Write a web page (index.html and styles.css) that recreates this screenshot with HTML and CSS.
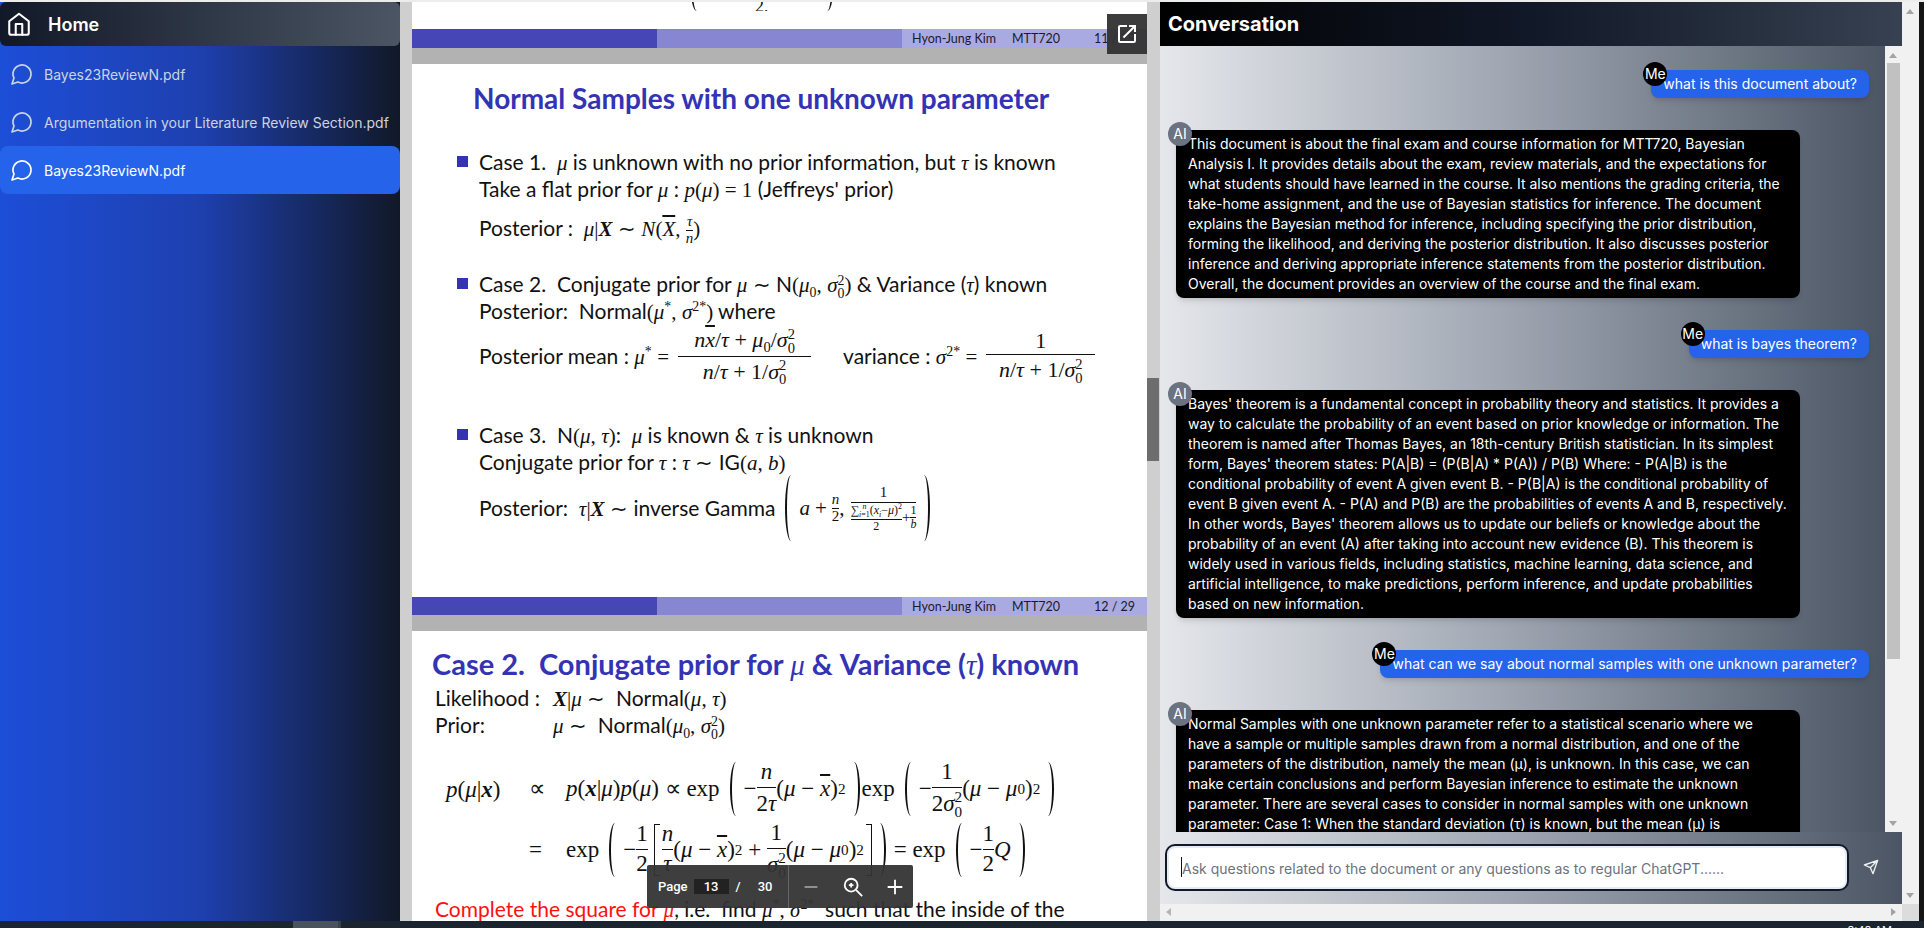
FILE: index.html
```html
<!DOCTYPE html>
<html lang="en">
<head>
<meta charset="utf-8">
<title>Conversation</title>
<link rel="stylesheet" href="styles.css">
</head>
<body>
<div class="app">
  <div class="main">
    <aside class="sidebar">
      <div class="home">
        <svg class="home-icon" viewBox="0 0 24 24"><path d="M3 9.5 12 2.5l9 7V20a2 2 0 0 1-2 2H5a2 2 0 0 1-2-2z"/><path d="M9 22V12h6v10"/></svg>
        <span>Home</span>
      </div>
      <nav class="docs">
        <a class="doc"><svg class="doc-icon" viewBox="0 0 24 24"><path d="M7.9 20A9 9 0 1 0 4 16.1L2 22Z"/></svg><span>Bayes23ReviewN.pdf</span></a>
        <a class="doc"><svg class="doc-icon" viewBox="0 0 24 24"><path d="M7.9 20A9 9 0 1 0 4 16.1L2 22Z"/></svg><span>Argumentation in your Literature Review Section.pdf</span></a>
        <a class="doc active"><svg class="doc-icon" viewBox="0 0 24 24"><path d="M7.9 20A9 9 0 1 0 4 16.1L2 22Z"/></svg><span>Bayes23ReviewN.pdf</span></a>
      </nav>
    </aside>

    <section class="pdf-pane">
      <div class="viewer">
        <div class="page page-tail">
          <div class="tail-math"><i class="lp p40"></i><span class="tail-two">2,</span><i class="rp p40"></i></div>
          <div class="bar">
            <i class="seg dark"></i><i class="seg mid"></i>
            <div class="seg light"><span class="bar-name">Hyon-Jung Kim</span><span class="bar-code">MTT720</span><span class="bar-num">11 / 29</span></div>
          </div>
        </div>

        <div class="page page-full">
          <h2 class="title title-a">Normal Samples with one unknown parameter</h2>
          <ul class="cases">
            <li class="case first">
              <p class="ln">Case 1. &nbsp;<span class="m">μ</span> is unknown with no prior information, but <span class="m">τ</span> is known</p>
              <p class="ln">Take a flat prior for <span class="m">μ</span> : <span class="m">p</span><span class="r">(</span><span class="m">μ</span><span class="r">) = 1</span> (Jeffreys' prior)</p>
              <p class="ln post1">Posterior : &nbsp;<span class="m">μ</span><span class="r">|</span><b class="bx">X</b> <span class="r">∼</span> <span class="m">N</span><span class="r">(</span><span class="m over">X</span><span class="r">,</span> <span class="frac small"><span class="m num">τ</span><span class="m den">n</span></span><span class="r">)</span></p>
            </li>
            <li class="case second">
              <p class="ln">Case 2. &nbsp;Conjugate prior for <span class="m">μ</span> <span class="r">∼</span> N<span class="r">(</span><span class="m">μ</span><sub class="r">0</sub><span class="r">,</span> <span class="m">σ</span><span class="ss"><span>2</span><span>0</span></span><span class="r">)</span> &amp; Variance (<span class="m">τ</span>) known</p>
              <p class="ln">Posterior: &nbsp;Normal<span class="r">(</span><span class="m">μ</span><sup class="r">*</sup><span class="r">,</span> <span class="m">σ</span><sup class="r">2*</sup><span class="r">)</span> where</p>
              <div class="ln eq mean">
                <span>Posterior mean : <span class="m">μ</span><sup class="r">*</sup> <span class="r">=</span></span>
                <span class="frac wide-a"><span class="num"><span class="m">n</span><span class="m over">x</span><span class="r">/</span><span class="m">τ</span><span class="r"> + </span><span class="m">μ</span><sub class="r">0</sub><span class="r">/</span><span class="m">σ</span><span class="ss"><span>2</span><span>0</span></span></span><span class="den"><span class="m">n</span><span class="r">/</span><span class="m">τ</span><span class="r"> + 1/</span><span class="m">σ</span><span class="ss"><span>2</span><span>0</span></span></span></span>
                <span class="variance">variance : <span class="m">σ</span><sup class="r">2*</sup> <span class="r">=</span></span>
                <span class="frac wide-b"><span class="num r">1</span><span class="den"><span class="m">n</span><span class="r">/</span><span class="m">τ</span><span class="r"> + 1/</span><span class="m">σ</span><span class="ss"><span>2</span><span>0</span></span></span></span>
              </div>
            </li>
            <li class="case third">
              <p class="ln">Case 3. &nbsp;N<span class="r">(</span><span class="m">μ</span><span class="r">,</span> <span class="m">τ</span><span class="r">)</span>: &nbsp;<span class="m">μ</span> is known &amp; <span class="m">τ</span> is unknown</p>
              <p class="ln">Conjugate prior for <span class="m">τ</span> : <span class="m">τ</span> <span class="r">∼</span> IG<span class="r">(</span><span class="m">a</span><span class="r">,</span> <span class="m">b</span><span class="r">)</span></p>
              <div class="ln eq gamma">
                <span>Posterior: &nbsp;<span class="m">τ</span><span class="r">|</span><b class="bx">X</b> <span class="r">∼</span> inverse Gamma</span>
                <i class="lp p66"></i>
                <span class="m">a</span><span class="r plus">+</span>
                <span class="frac small"><span class="m num">n</span><span class="r den">2</span></span><span class="r">,</span>
                <span class="frac nest"><span class="num r">1</span><span class="den nest-den"><span class="frac tiny"><span class="num"><span class="r">∑</span><span class="ss"><span class="m">n</span><span><span class="m">i</span>=1</span></span><span class="r">(</span><span class="m">x</span><sub class="m">i</sub><span class="r">−</span><span class="m">μ</span><span class="r">)</span><sup class="r">2</sup></span><span class="den r">2</span></span><span class="r">+</span><span class="frac tiny"><span class="num r">1</span><span class="den m">b</span></span></span></span>
                <i class="rp p66"></i>
              </div>
            </li>
          </ul>
          <div class="bar bar-end">
            <i class="seg dark"></i><i class="seg mid"></i>
            <div class="seg light"><span class="bar-name">Hyon-Jung Kim</span><span class="bar-code">MTT720</span><span class="bar-num">12 / 29</span></div>
          </div>
        </div>

        <div class="page page-last">
          <h2 class="title title-b">Case 2. &nbsp;Conjugate prior for <span class="m thin">μ</span> &amp; Variance (<span class="m thin">τ</span>) known</h2>
          <div class="defs">
            <p class="ln def"><span class="def-label">Likelihood :</span><span><b class="bx">X</b><span class="r">|</span><span class="m">μ</span> <span class="r">∼</span> &nbsp;Normal<span class="r">(</span><span class="m">μ</span><span class="r">,</span> <span class="m">τ</span><span class="r">)</span></span></p>
            <p class="ln def"><span class="def-label">Prior:</span><span><span class="m">μ</span> <span class="r">∼</span> &nbsp;Normal<span class="r">(</span><span class="m">μ</span><sub class="r">0</sub><span class="r">,</span> <span class="m">σ</span><span class="ss"><span>2</span><span>0</span></span><span class="r">)</span></span></p>
          </div>
          <div class="derivation">
            <span class="m-cell"><span class="m">p</span><span class="r">(</span><span class="m">μ</span><span class="r">|</span><b class="bx">x</b><span class="r">)</span></span>
            <span class="r rel">∝</span>
            <div class="eq rhs">
              <span class="m">p</span><span class="r">(</span><b class="bx">x</b><span class="r">|</span><span class="m">μ</span><span class="r">)</span><span class="m">p</span><span class="r">(</span><span class="m">μ</span><span class="r">)&nbsp;∝&nbsp;exp</span>
              <i class="lp p56"></i><span class="r">−</span><span class="frac"><span class="m num">n</span><span class="den"><span class="r">2</span><span class="m">τ</span></span></span><span class="r">(</span><span class="m">μ</span><span class="r">&nbsp;−&nbsp;</span><span class="m over">x</span><span class="r">)</span><sup class="r">2</sup><i class="rp p56"></i>
              <span class="r">exp</span>
              <i class="lp p56"></i><span class="r">−</span><span class="frac"><span class="r num">1</span><span class="den"><span class="r">2</span><span class="m">σ</span><span class="ss"><span>2</span><span>0</span></span></span></span><span class="r">(</span><span class="m">μ</span><span class="r">&nbsp;−&nbsp;</span><span class="m">μ</span><sub class="r">0</sub><span class="r">)</span><sup class="r">2</sup><i class="rp p56"></i>
            </div>
            <span></span>
            <span class="r rel">=</span>
            <div class="eq rhs">
              <span class="r">exp</span>
              <i class="lp p56"></i><span class="r">−</span><span class="frac"><span class="r num">1</span><span class="r den">2</span></span>
              <i class="lb"></i><span class="frac"><span class="m num">n</span><span class="m den">τ</span></span><span class="r">(</span><span class="m">μ</span><span class="r">&nbsp;−&nbsp;</span><span class="m over">x</span><span class="r">)</span><sup class="r">2</sup><span class="r">&nbsp;+&nbsp;</span><span class="frac"><span class="r num">1</span><span class="den"><span class="m">σ</span><span class="ss"><span>2</span><span>0</span></span></span></span><span class="r">(</span><span class="m">μ</span><span class="r">&nbsp;−&nbsp;</span><span class="m">μ</span><sub class="r">0</sub><span class="r">)</span><sup class="r">2</sup><i class="rb"></i><i class="rp p56"></i>
              <span class="r">&nbsp;=&nbsp;exp</span>
              <i class="lp p56"></i><span class="r">−</span><span class="frac"><span class="r num">1</span><span class="r den">2</span></span><span class="m">Q</span><i class="rp p56"></i>
            </div>
          </div>
          <p class="ln complete"><span class="red">Complete the square for <span class="m">μ</span></span>, i.e. &nbsp;find <span class="m">μ</span><sup class="r">*</sup><span class="r">,</span> <span class="m">σ</span><sup class="r">2*</sup> &nbsp;such that the inside of the</p>
        </div>

        <button class="open-btn" aria-label="Open in new window"><svg viewBox="0 0 24 24"><path d="M19 19H5V5h7V3H5c-1.11 0-2 .9-2 2v14c0 1.1.89 2 2 2h14c1.1 0 2-.9 2-2v-7h-2v7zM14 3v2h3.59l-9.83 9.83 1.41 1.41L19 6.41V10h2V3h-7z"/></svg></button>

        <div class="toolbar">
          <div class="tb-pages"><span>Page</span><span class="tb-num">13</span><span class="tb-slash">/</span><span class="tb-total">30</span></div>
          <div class="tb-zoom">
            <svg class="tb-icon dim" viewBox="0 0 24 24"><path d="M5 12h14"/></svg>
            <svg class="tb-icon" viewBox="0 0 24 24"><circle cx="10" cy="10" r="7"/><path d="M15.5 15.5 22 22M10 7.5v5M7.5 10h5"/></svg>
            <svg class="tb-icon" viewBox="0 0 24 24"><path d="M4 12h16M12 4v16"/></svg>
          </div>
        </div>
      </div>
      <div class="pdf-scroll"><i class="pdf-thumb"></i></div>
    </section>

    <section class="conv">
      <div class="conv-col">
        <header class="conv-head">Conversation</header>
        <div class="chat-row">
          <div class="messages">
            <div class="msg user"><span class="avatar me">Me</span>what is this document about?</div>
            <div class="msg ai"><span class="avatar bot">AI</span>This document is about the final exam and course information for MTT720, Bayesian Analysis I. It provides details about the exam, review materials, and the expectations for what students should have learned in the course. It also mentions the grading criteria, the take-home assignment, and the use of Bayesian statistics for inference. The document explains the Bayesian method for inference, including specifying the prior distribution, forming the likelihood, and deriving the posterior distribution. It also discusses posterior inference and deriving appropriate inference statements from the posterior distribution. Overall, the document provides an overview of the course and the final exam.</div>
            <div class="msg user"><span class="avatar me">Me</span>what is bayes theorem?</div>
            <div class="msg ai"><span class="avatar bot">AI</span>Bayes' theorem is a fundamental concept in probability theory and statistics. It provides a way to calculate the probability of an event based on prior knowledge or information. The theorem is named after Thomas Bayes, an 18th-century British statistician. In its simplest form, Bayes' theorem states: P(A|B) = (P(B|A) * P(A)) / P(B) Where: - P(A|B) is the conditional probability of event A given event B. - P(B|A) is the conditional probability of event B given event A. - P(A) and P(B) are the probabilities of events A and B, respectively. In other words, Bayes' theorem allows us to update our beliefs or knowledge about the probability of an event (A) after taking into account new evidence (B). This theorem is widely used in various fields, including statistics, machine learning, data science, and artificial intelligence, to make predictions, perform inference, and update probabilities based on new information.</div>
            <div class="msg user"><span class="avatar me">Me</span>what can we say about normal samples with one unknown parameter?</div>
            <div class="msg ai"><span class="avatar bot">AI</span>Normal Samples with one unknown parameter refer to a statistical scenario where we have a sample or multiple samples drawn from a normal distribution, and one of the parameters of the distribution, namely the mean (μ), is unknown. In this case, we can make certain conclusions and perform Bayesian inference to estimate the unknown parameter. There are several cases to consider in normal samples with one unknown parameter: Case 1: When the standard deviation (τ) is known, but the mean (μ) is unknown, we can take a flat prior for μ, called Jeffreys' prior, which is represented as p(μ) = 1. The posterior distribution for μ is then given by</div>
          </div>
          <div class="vscroll inner">
            <i class="arrow up"></i>
            <div class="vtrack"><i class="vthumb"></i></div>
            <i class="arrow down"></i>
          </div>
        </div>
        <div class="composer">
          <div class="input"><i class="caret"></i><span>Ask questions related to the document or any questions as to regular ChatGPT......</span></div>
          <svg class="send" viewBox="0 0 24 24"><path d="M22 2 11 13M22 2l-7 20-4-9-9-4z"/></svg>
        </div>
        <div class="hscroll"><i class="arrow left"></i><i class="arrow right"></i></div>
      </div>
      <div class="vscroll outer">
        <i class="arrow up"></i>
        <i class="arrow down"></i>
        <i class="corner"></i>
      </div>
    </section>
    <div class="edge"></div>
  </div>
  <footer class="taskbar"><i class="task-a"></i><i class="task-b"></i><span class="clock">3:48 AM</span></footer>
</div>
</body>
</html>
```
FILE: styles.css
```css
* { box-sizing: border-box; }
html, body { margin: 0; height: 100%; }
body { background: #ececec; font-family: "Inter", "Liberation Sans", sans-serif; overflow: hidden; }
.app { width: 1924px; height: 928px; padding-top: 2px; display: flex; flex-direction: column; }
.main { height: 919px; display: flex; background: #111; }

/* sidebar */
.sidebar { width: 400px; flex: none; background: linear-gradient(to right, #1d4ed8, #1e40af 50%, #111827); }
.home { height: 44px; display: flex; align-items: center; gap: 16px; padding-left: 6px; border-radius: 6px; color: #fff; font-size: 18px; font-weight: 600; background: linear-gradient(to right, #111827, #4b5563); }
.home-icon { width: 26px; height: 26px; fill: none; stroke: #fff; stroke-width: 1.9; stroke-linejoin: round; stroke-linecap: round; }
.docs { display: flex; flex-direction: column; margin-top: 4px; }
.doc { height: 48px; display: flex; align-items: center; gap: 10px; padding-left: 10px; border-radius: 8px; font-size: 14px; color: #cbd5e1; }
.doc.active { color: #fff; background: #2563eb; }
.doc-icon { width: 24px; height: 24px; fill: none; stroke: currentColor; stroke-width: 1.7; stroke-linejoin: round; }

/* pdf */
.pdf-pane { width: 760px; flex: none; display: flex; padding-left: 12px; background: #cfcfcf; height: 919px; }
.viewer { position: relative; width: 735px; flex: none; overflow: hidden; display: flex; flex-direction: column; gap: 16px; background: #b2b2b2; box-shadow: none; font-family: "Lato", "Liberation Sans", sans-serif; color: #111; font-size: 21px; }
.pdf-scroll { width: 12px; flex: none; padding-top: 376px; }
.pdf-thumb { display: block; height: 83px; background: #6d6d6d; }
.page { background: #fff; flex: none; display: flex; flex-direction: column; }
.page-tail { height: 46px; }
.tail-math { height: 9px; overflow: hidden; display: flex; align-items: flex-end; justify-content: flex-start; padding-left: 269px; gap: 50px; }
.tail-two { font: 18px/9px "Liberation Serif", serif; position: relative; top: 0; }
.page-tail .bar { margin-top: auto; }
.page-full { height: 551px; }
.page-last { height: 290px; }
.bar { height: 19px; display: flex; flex: none; }
.bar-end { margin-top: auto; height: 18px; }
.seg { display: flex; width: 245.33px; align-items: center; }
.dark { background: #4646b6; }
.mid { background: #8686d2; }
.light { background: #aaaae2; color: #1a1a2a; font-size: 12.5px; padding-left: 10px; }
.bar-name { width: 83px; margin-right: 17px; white-space: nowrap; }
.bar-code { width: 48px; margin-right: 34px; }
.bar-num { white-space: nowrap; }

.title { margin: 0; color: #3333b3; font-weight: 700; white-space: nowrap; }
.title-a { font-size: 28px; line-height: 40px; margin-top: 14px; padding-left: 61px; }
.title-b { font-size: 29px; line-height: 40px; margin-top: 13px; padding-left: 20px; }
.m.thin { font-weight: 400; }
.cases { list-style: none; margin: 30px 0 0; padding: 0 0 0 67px; }
.case { position: relative; }
.case::before { content: ""; position: absolute; left: -22px; top: 8px; width: 11px; height: 11px; background: #3333b3; }
.second { margin-top: 29px; }
.third { margin-top: 35px; }
.ln { margin: 0; height: 27px; line-height: 27px; white-space: nowrap; }
.post1 { margin-top: 12px; }
.m { font-family: "Liberation Serif", serif; font-style: italic; }
.r { font-family: "Liberation Serif", serif; font-style: normal; }
.bx { font-family: "Liberation Serif", serif; font-style: italic; font-weight: 700; }
.over { text-decoration: overline; }
sub, sup { font-size: .66em; line-height: 0; }
.ss { display: inline-flex; flex-direction: column; font-family: "Liberation Serif", serif; font-size: .66em; line-height: .95; vertical-align: middle; }
.frac { display: inline-flex; flex-direction: column; align-items: stretch; text-align: center; vertical-align: middle; line-height: 1.25; white-space: nowrap; }
.frac .den { border-top: 1px solid #111; }
.frac.small { font-size: 15px; line-height: 1.05; }
.eq { display: flex; align-items: center; white-space: nowrap; }
.mean { height: 60px; margin-top: 2px; font-size: 21px; }
.wide-a { width: 133px; margin-left: 9px; font-size: 22px; }
.wide-b { width: 109px; margin-left: 9px; font-size: 22px; }
.variance { margin-left: 32px; }
.gamma { height: 66px; }
.plus { margin: 0 5px; }
.lp, .rp { display: block; flex: none; width: 12px; border: 0 solid #111; border-radius: 50%; }
.lp { border-left-width: 2px; margin: 0 2px 0 10px; }
.rp { border-right-width: 2px; margin: 0 2px; }
.p40 { height: 40px; }
.p56 { height: 54px; }
.p66 { height: 66px; }
.nest { margin-left: 6px; font-size: 15px; }
.nest-den { display: flex; align-items: center; }
.frac.tiny { font-size: 12px; line-height: 1.1; }
.lb, .rb { display: block; flex: none; width: 6px; height: 52px; border: 1.5px solid #111; }
.lb { border-right: 0; margin: 0 2px 0 6px; }
.rb { border-left: 0; margin-left: 2px; }

.defs { padding-left: 23px; margin-top: -1px; }
.def { display: flex; }
.def-label { width: 118px; }
.derivation { display: grid; grid-template-columns: 83px 37px 1fr; grid-auto-rows: 61px; align-items: center; padding-left: 34px; margin-top: 20px; font-size: 23px; }
.m-cell { white-space: nowrap; }
.rel { font-size: 23px; }
.complete { margin-top: 15px; padding-left: 23px; }
.red { color: #ff1010; }

.open-btn { position: absolute; right: 0; top: 12px; width: 40px; height: 40px; padding: 8px; border: 0; background: rgba(50, 50, 50, .95); }
.open-btn svg { display: block; width: 24px; height: 24px; fill: #fff; }
.toolbar { position: absolute; left: 235px; top: 863px; width: 266px; height: 43px; display: flex; align-items: center; background: rgba(52, 52, 52, .95); border-radius: 2px; color: #fff; font: 500 13px "Roboto", sans-serif; }
.tb-pages { width: 142px; height: 100%; display: flex; align-items: center; padding-left: 11px; border-right: 1px solid #666; }
.tb-num { width: 35px; height: 15px; line-height: 15px; margin-left: 6px; text-align: center; background: #222; }
.tb-slash { margin-left: 7px; }
.tb-total { margin-left: 17px; }
.tb-zoom { display: flex; align-items: center; padding-left: 11px; gap: 20px; }
.tb-icon { width: 22px; height: 22px; fill: none; stroke: #fff; stroke-width: 2; }
.tb-icon.dim { stroke: #999; }

/* conversation */
.conv { width: 759px; flex: none; display: flex; }
.conv-col { width: 742px; flex: none; display: flex; flex-direction: column; }
.conv-head { height: 44px; flex: none; display: flex; align-items: center; padding-left: 8px; color: #fff; font-size: 20px; font-weight: 700; background: linear-gradient(to right, #000, #111827 50%, #374151); }
.chat-row { height: 786px; flex: none; display: flex; }
.messages { width: 725px; flex: none; overflow: hidden; display: flex; flex-direction: column; gap: 32px; padding: 24px 16px 0; background: linear-gradient(to right, #e5e7eb, #9ca3af 50%, #4b5563); font-size: 14px; line-height: 20px; color: #fff; }
.msg { position: relative; flex: none; padding: 4px 12px; border-radius: 8px; max-width: 90%; box-shadow: 0 4px 6px -1px rgba(0,0,0,.1), 0 2px 4px -2px rgba(0,0,0,.1); }
.msg.user { align-self: flex-end; background: #2563eb; }
.msg.ai { align-self: flex-start; background: #000; }
.avatar { position: absolute; left: -8px; top: -8px; width: 24px; height: 24px; border-radius: 50%; display: flex; align-items: center; justify-content: center; font-size: 14px; color: #fff; }
.me { background: #000; }
.bot { background: #6b7280; }

.vscroll { position: relative; width: 17px; flex: none; background: #f1f1f1; }
.arrow { position: absolute; width: 0; height: 0; border: 4px solid transparent; }
.up { top: 6px; left: 4px; border-top: 0; border-bottom: 5px solid #a3a3a3; }
.down { left: 4px; border-bottom: 0; border-top: 5px solid #a3a3a3; }
.inner .down { bottom: 6px; }
.inner .up { top: 7px; }
.vtrack { padding: 17px 2px 0; }
.vthumb { display: block; height: 596px; background: #c1c1c1; }
.outer .up { top: 7px; }
.outer .down { bottom: 23px; }
.corner { position: absolute; left: 0; bottom: 0; width: 17px; height: 17px; background: #dcdcdc; }

.composer { height: 72px; flex: none; display: flex; align-items: flex-start; padding: 12px 0 0 5px; background: linear-gradient(to right, #e5e7eb, #9ca3af 50%, #4b5563); }
.input { position: relative; width: 684px; height: 47px; flex: none; display: flex; align-items: center; padding: 2px 0 0 15px; background: #fff; border: 2px solid #111827; border-radius: 10px; box-shadow: inset 0 0 0 2px #e6ebf5; color: #6b7280; font-size: 14px; }
.caret { position: absolute; left: 14px; top: 11px; width: 1px; height: 20px; background: #111; }
.send { width: 16px; height: 16px; margin: 15px 0 0 14px; fill: none; stroke: #eef0f4; stroke-width: 2; stroke-linejoin: round; stroke-linecap: round; }
.hscroll { position: relative; height: 17px; flex: none; background: #f1f1f1; }
.left { top: 4px; left: 6px; border-left: 0; border-right: 5px solid #b5b5b5; }
.right { top: 4px; right: 6px; border-right: 0; border-left: 5px solid #a3a3a3; }
.edge { width: 5px; flex: none; background: #151515; }

.taskbar { position: relative; height: 7px; flex: none; background: #1b2530; overflow: hidden; display: flex; }
.task-a { width: 45px; margin-left: 293px; background: #4a525b; }
.task-b { width: 3px; background: #39424c; }
.clock { position: absolute; right: 32px; top: 3px; color: #fff; font-size: 11px; line-height: 12px; }
```
